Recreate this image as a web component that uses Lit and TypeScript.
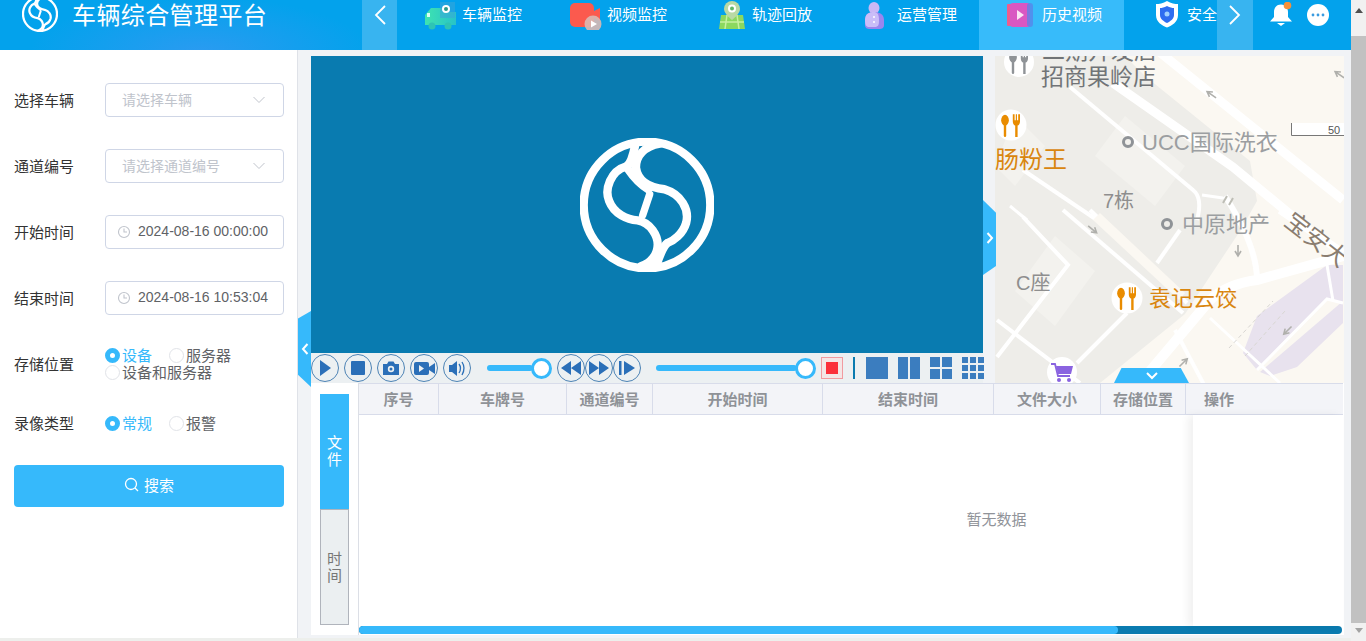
import { LitElement, html, css, svg } from 'lit';
import { customElement } from 'lit/decorators.js';

const logo = (size: number) => html`
  <svg width=${size} height=${size} viewBox="58 37 400 400" fill="none" stroke="#fff" stroke-width="25" stroke-linecap="round">
    <circle cx="258" cy="237" r="189" />
    <path d="M222 62C215 95 210 115 195 122C150 135 130 190 145 225C160 265 200 280 230 283C270 290 290 330 290 355C290 385 270 410 240 420" />
    <path d="M296 54C250 62 225 90 225 125C230 165 265 185 310 190C360 205 385 250 375 290C365 325 335 345 320 350C305 360 295 390 285 420" />
    <path d="M200 128C215 150 235 175 262 190" />
    <path d="M266 205L245 268" stroke-width="22" />
  </svg>
`;

const navIcons = {
  car: html`<svg width="38" height="30" viewBox="0 0 38 30">
    <defs><linearGradient id="cg" x1="0" x2="1"><stop offset="0" stop-color="#3fe3b0" /><stop offset="1" stop-color="#27c3c8" /></linearGradient></defs>
    <path d="M7 8h11v4h14v13H1V15z" fill="url(#cg)" />
    <circle cx="8" cy="26" r="3.500" fill="#2ec4b4" /><circle cx="24" cy="26" r="3.500" fill="#2ec4b4" />
    <rect x="3" y="13" width="3" height="4" fill="#d8fff4" />
    <rect x="16" y="2" width="15" height="16" fill="#3aa6d8" opacity=".55" />
    <circle cx="22" cy="9" r="4" fill="#fff" /><circle cx="22" cy="9" r="2" fill="#2c9a8a" />
  </svg>`,
  video: html`<svg width="38" height="30" viewBox="-1 0 38 30">
    <rect x="0" y="3" width="24" height="24" rx="5" fill="#fb5a4e" />
    <path d="M24 11l6-3v13l-6-3z" fill="#fb5a4e" />
    <circle cx="23" cy="24" r="8.500" fill="#d9b9b4" opacity=".9" />
    <path d="M21 20.500l6 3.500-6 3.500z" fill="#fff" />
  </svg>`,
  track: html`<svg width="38" height="30" viewBox="-4 0 38 30">
    <path d="M3 15h22l2 14H1z" fill="#8bd85f" />
    <path d="M9 15l-2 14M19 15l2 14M2 22h24" stroke="#c6f0a0" stroke-width="1.500" />
    <path d="M14 1a8 8 0 0 1 8 8c0 5-8 11-8 11s-8-6-8-11a8 8 0 0 1 8-8z" fill="#b9d9a4" />
    <circle cx="14" cy="8.500" r="4" fill="#fff" /><circle cx="14" cy="8.500" r="2" fill="#5fb86a" />
  </svg>`,
  person: html`<svg width="38" height="30" viewBox="-3 0 38 30">
    <ellipse cx="12" cy="8" rx="5.500" ry="6" fill="#c9b8f5" />
    <path d="M3 20c0-6 4-8 9-8s10 2 10 8v5c0 3-2 4-5 4H8c-3 0-5-1-5-4z" fill="#9a86ee" />
    <path d="M3 20c0-6 4-8 9-8 3 0 5 2 5 8s-1 7-5 7H7c-3 0-4-2-4-7z" fill="#cabdf8" />
    <circle cx="12" cy="17" r="1" fill="#fff" /><circle cx="12" cy="22" r="1" fill="#fff" />
  </svg>`,
  history: html`<svg width="38" height="30" viewBox="-3 0 38 30">
    <rect x="0" y="4" width="6" height="22" rx="1" fill="#ef5d8d" />
    <rect x="3" y="3" width="20" height="24" rx="3" fill="#d957c2" />
    <rect x="20" y="3" width="6" height="24" rx="3" fill="#5a83e8" opacity=".75" />
    <path d="M10 10l7 5-7 5z" fill="#fbe3f4" />
  </svg>`,
  safe: html`<svg width="38" height="30" viewBox="-6 0 38 30">
    <path d="M12 1c4 2.500 8 3 11 3v11c0 7-6 10.500-11 12.500C7 25.500 1 22 1 15V4c3 0 7-.5 11-3z" fill="#fff" />
    <path d="M12 6c3 1.500 5 2 7 2v7c0 4-4 6.500-7 8-3-1.500-7-4-7-8V8c2 0 4-.5 7-2z" fill="#2f6df0" />
    <circle cx="12" cy="14" r="2.500" fill="#9fd0ff" />
  </svg>`,
};

const navItems = [
  { name: '车辆监控', icon: navIcons.car },
  { name: '视频监控', icon: navIcons.video },
  { name: '轨迹回放', icon: navIcons.track },
  { name: '运营管理', icon: navIcons.person },
  { name: '历史视频', icon: navIcons.history, active: true },
  { name: '安全监控', icon: navIcons.safe },
];

const columns = [
  { name: '序号', width: 80 },
  { name: '车牌号', width: 128 },
  { name: '通道编号', width: 86 },
  { name: '开始时间', width: 170 },
  { name: '结束时间', width: 171 },
  { name: '文件大小', width: 107 },
  { name: '存储位置', width: 85 },
];

const chevronDown = html`<svg width="14" height="8" viewBox="0 0 14 8" fill="none" stroke="#c0c4cc" stroke-width="1"><path d="M1.500 1l5.500 5.500L12.500 1" /></svg>`;
const clock = html`<svg width="14" height="14" viewBox="0 0 14 14" fill="none" stroke="#c0c4cc" stroke-width="1.100"><circle cx="7" cy="7" r="5.500" /><path d="M7 3.500V7h3" /></svg>`;

const forkIcon = (color: string) => svg`
  <g transform="scale(1.200)">
    <ellipse cx="-5" cy="-4" rx="3.200" ry="4.500" fill=${color} />
    <rect x="-6" y="-2" width="2" height="12" rx="1" fill=${color} />
    <path d="M1.500-9v6c0 2 1 3 2 3.500V10h2V.5c1-.5 2-1.500 2-3.500v-6H6v5H5v-5H4v5H3v-5z" fill=${color} />
  </g>
`;

const roads: [string, number][] = [
  ['M162-6L348 144', 9],
  ['M118 27L238 111 302 164', 9],
  ['M285 154L348 197', 8],
  ['M75 31L198 134Q208 142 202 164', 4],
  ['M207 139L228 142', 3],
  ['M185 174L162 207', 4],
  ['M28 114L102 164', 4],
  ['M15 150L32 164', 3],
  ['M68 154L188 257', 4],
  ['M95 154L192 247', 4],
  ['M145 327L215 244Q232 228 262 224L348 200', 10],
  ['M230 140Q262 190 262 224', 6],
  ['M28 161L73 209 2 301', 4],
  ['M2 264L85 327', 4],
  ['M132 257L82 307', 4],
  ['M215 340L180 274', 4],
  ['M215 262L285 327', 3],
  ['M262 314L332 243 348 247', 3],
  ['M332 209L338 245', 3],
];

// little one-way arrows drawn on the roads: [x, y, angle]
const roadArrows: [number, number, number][] = [
  [217, 39, 35],
  [345, 19, 35],
  [97, 173, 220],
  [243, 194, -90],
  [293, 274, -45],
  [188, 307, 135],
];

const mapView = html`
  <svg class="map-art" width="349" height="327" viewBox="0 0 349 327">
    <rect width="349" height="327" fill="#fbf8f2" />
    <path d="M0 0H130L150 20 255 105 262 145 245 175 190 258 105 327H0z" fill="#eeede9" />
    <path d="M20 60L50 90 20 130 0 110zM60 180L100 215 60 270 20 235zM130 60L190 110 160 150 100 100z" fill="#f3f2ee" />
    <path d="M348 209H332L262 260 248 297 262 314 332 243 348 247z" fill="#e8e2ee" />
    <path d="M265 316L348 245V267L302 311 275 320z" fill="#e8e2ee" />
    ${roads.map(([d, w]) => svg`<path d=${d} fill="none" stroke="#fff" stroke-width=${w} />`)}
    <path d="M105 157L190 237 184 244 98 164z" fill="#fbf8f2" />
    <path d="M234 292L278 245M250 300L290 255" fill="none" stroke="#d8d6d2" stroke-width="1" stroke-dasharray="4 3" />
    ${roadArrows.map(
      ([x, y, a]) => svg`<path transform="translate(${x} ${y}) rotate(${a})" d="M-6 0H5M-1-3L-6 0-1 3" fill="none" stroke="#b0b0ac" stroke-width="1.600" />`,
    )}
    <path d="M228 147l4-7M234 149l4-7" stroke="#bdbdb5" stroke-width="2" />

    <text x="47" y="3" class="label dark" font-size="23">二期开发店</text>
    <text x="46" y="29" class="label dark" font-size="23">招商果岭店</text>
    <text x="0" y="112" class="label orange" font-size="24">肠粉王</text>
    <circle cx="133" cy="86" r="4.500" fill="none" stroke="#8f9397" stroke-width="3" />
    <text x="147" y="94" class="label gray" font-size="22">UCC国际洗衣</text>
    <text x="108" y="152" class="label mid" font-size="20">7栋</text>
    <circle cx="172" cy="168" r="4.500" fill="none" stroke="#8f9397" stroke-width="3" />
    <text x="187" y="176" class="label gray" font-size="22">中原地产</text>
    <text transform="translate(288 168) rotate(38)" class="label brown" font-size="24">宝安大</text>
    <text x="21" y="234" class="label mid" font-size="20">C座</text>
    <text x="154" y="250" class="label orange" font-size="22">袁记云饺</text>

    <g transform="translate(24 6)"><circle r="15" fill="#fff" />${forkIcon('#8f9397')}</g>
    <g transform="translate(16 69)"><circle r="15.500" fill="#fff" />${forkIcon('#e98c00')}</g>
    <g transform="translate(132 242)"><circle r="15.500" fill="#fff" />${forkIcon('#e98c00')}</g>
    <g transform="translate(67 316)">
      <circle r="15" fill="#fff" />
      <path d="M-11-8h4l3 12h12" fill="none" stroke="#8a63e0" stroke-width="1.800" />
      <path d="M-6-6H11L9 2H-4z" fill="#8a63e0" />
      <circle cx="-3" cy="8" r="2" fill="#8a63e0" /><circle cx="7" cy="8" r="2" fill="#8a63e0" />
    </g>

    <rect x="296" y="67" width="53" height="13" fill="#fff" />
    <path d="M296.500 67v12.500H349" fill="none" stroke="#777" stroke-width="1" />
    <text x="333" y="78" font-size="11" fill="#555" font-family="Liberation Sans">50</text>
  </svg>
`;

const playerButtons = [
  svg`<path d="M9 6l11 8-11 8z" />`,
  svg`<rect x="7" y="7" width="14" height="14" rx="1" />`,
  svg`<path d="M6 10h4l1.500-2.500h5L18 10h4v11H6z" /><circle cx="14" cy="15" r="3.200" fill="#ecf0f2" /><circle cx="14" cy="15" r="1.500" />`,
  svg`<rect x="4" y="8" width="15" height="13" rx="2" /><path d="M19 13l6-4v11l-6-4z" /><path d="M9 11l5 3.500-5 3.500z" fill="#ecf0f2" />`,
  svg`<path d="M6 11h3l5-4v15l-5-4H6z" /><path d="M16 10q3 4 0 9M19 8q4 6 0 13" fill="none" stroke="#2b6fb8" stroke-width="1.300" />`,
];
const seekButtons = [
  svg`<path d="M14 7v14L4 14zM24 7v14L14 14z" />`,
  svg`<path d="M4 7v14l10-7zM14 7v14l10-7z" />`,
  svg`<rect x="6" y="7" width="2.500" height="14" /><path d="M11 7v14l11-7z" />`,
];

const circleBtn = (icon: unknown) => html`
  <span class="circle"><svg width="28" height="28" viewBox="0 0 28 28" fill="#2b6fb8">${icon}</svg></span>
`;

const grids = [
  svg`<rect width="22" height="22" />`,
  svg`<rect width="10" height="22" /><rect x="12" width="10" height="22" />`,
  svg`<rect width="10" height="10" /><rect x="12" width="10" height="10" /><rect y="12" width="10" height="10" /><rect x="12" y="12" width="10" height="10" />`,
  svg`${[0, 8, 16].map((y) => [0, 8, 16].map((x) => svg`<rect x=${x} y=${y} width="6" height="6" />`))}`,
];

@customElement('app-root')
export class AppRoot extends LitElement {
  static styles = css`
    :host {
      display: block;
      width: 1366px;
      height: 641px;
      overflow: hidden;
      font-family: 'Liberation Sans', 'Noto Sans CJK SC', sans-serif;
      font-size: 14px;
      color: #333;
      background: #fff;
    }
    .page { display: flex; height: 641px; }
    .content { width: 1351px; display: flex; flex-direction: column; }

    /* page scrollbar */
    .vscroll { width: 15px; background: #f1f1f1; display: flex; flex-direction: column; align-items: center; }
    .vscroll .up { margin-top: 8px; border: 4px solid transparent; border-top: 0; border-bottom: 5px solid #505050; }
    .vscroll .thumb { width: 15px; height: 587px; margin-top: 23px; background: #c1c1c1; }
    .vscroll .down { margin-top: 5px; border: 4px solid transparent; border-bottom: 0; border-top: 5px solid #a3a3a3; }

    /* header */
    .header {
      height: 50px;
      flex: none;
      display: flex;
      background: radial-gradient(ellipse 170px 55px at 200px 52px, #2a9bf1, transparent), #03a2ec;
      color: #fff;
    }
    .brand { width: 362px; display: flex; padding-left: 22px; box-sizing: border-box; }
    .brand .mark { margin-top: -4px; height: 37px; }
    .brand .title { margin: 2px 0 0 14px; font-size: 24px; line-height: 28px; letter-spacing: .4px; }
    .arrow { width: 35px; background: #38b4f0; display: flex; align-items: flex-start; justify-content: center; padding-top: 4px; box-sizing: border-box; }
    .arrow.next { width: 36px; }
    .nav { width: 820px; overflow: hidden; display: flex; padding-left: 2px; box-sizing: border-box; }
    .nav-item { flex: none; width: 145px; height: 50px; display: flex; padding-left: 25px; box-sizing: border-box; font-size: 15px; line-height: 30px; white-space: nowrap; }
    .nav-item.active { background: #37bbfa; }
    .nav-item svg { flex: none; }
    .tools { display: flex; padding: 2px 0 0 17px; gap: 15px; }
    .tools svg { display: block; }

    .body { flex: 1; display: flex; min-height: 0; }

    /* search form */
    .side { width: 270px; flex: none; padding: 33px 13px 0 14px; box-sizing: content-box; border-right: 1px solid #dfe2e8; }
    .row { display: flex; align-items: center; margin-bottom: 32px; }
    .row label { width: 91px; flex: none; font-size: 15px; padding-bottom: 2px; }
    .field { width: 179px; height: 34px; box-sizing: border-box; border: 1px solid #cfd6e6; border-radius: 4px; display: flex; align-items: center; padding: 0 17px 0 16px; justify-content: space-between; color: #c0c4cc; }
    .field span { padding-bottom: 2px; }
    .field.date { justify-content: flex-start; padding: 0 11px; gap: 7px; color: #606266; }
    .radios { font-size: 15px; line-height: 17px; color: #606266; }
    .radio-line { display: flex; }
    .radio { display: flex; align-items: center; }
    .radio + .radio { margin-left: 17px; }
    .dot { width: 15px; height: 15px; box-sizing: border-box; border-radius: 50%; border: 1px solid #e1e3e8; background: #fff; margin-right: 2px; }
    .radio.on { color: #36b9fb; }
    .radio.on .dot { border: 5px solid #36b9fb; }
    .types { margin-bottom: 30px; margin-top: -1px; }
    .search { height: 42px; box-sizing: border-box; padding-bottom: 3px; background: #36b9fb; border-radius: 4px; color: #fff; font-size: 15px; display: flex; align-items: center; justify-content: center; gap: 5px; }

    /* player + map + table */
    .main { flex: 1; min-width: 0; background: #f1f3f6; padding: 6px 7px 6px 13px; position: relative; }
    .top { display: flex; gap: 12px; height: 327px; }
    .player { width: 672px; flex: none; display: flex; flex-direction: column; }
    .screen { height: 297px; background: #097bb0; display: flex; align-items: center; justify-content: center; overflow: hidden; }
    .controls { height: 30px; background: #ecf0f2; display: flex; align-items: center; }
    .circle { width: 28px; height: 28px; box-sizing: border-box; border: 1px solid #4d83b5; border-radius: 50%; flex: none; display: block; position: relative; }
    .circle svg { position: absolute; left: -1px; top: -1px; }
    .group { display: flex; gap: 5px; }
    .seek { display: flex; margin-left: 5px; }
    .slider { height: 22px; display: flex; align-items: center; flex: none; }
    .slider .track { flex: 1; height: 6px; background: #36b9fb; border-radius: 3px; margin-right: -2px; }
    .slider .knob { width: 21px; height: 21px; flex: none; box-sizing: border-box; background: #fff; border: 3px solid #36b9fb; border-radius: 50%; }
    .rec { width: 22px; height: 22px; box-sizing: border-box; border: 1px solid #f19ba0; background: #f4e6e6; margin-left: 5px; display: flex; align-items: center; justify-content: center; flex: none; }
    .rec i { width: 12px; height: 12px; background: #fb2f3a; display: block; }
    .divider { width: 2px; height: 22px; background: #0a7bb0; margin: 0 11px 0 10px; flex: none; }
    .grids { display: flex; gap: 10px; }
    .grids svg { display: block; fill: #3b7dbf; }

    .map { width: 349px; flex: none; overflow: hidden; }
    .map-art { display: block; }
    .label { font-family: 'Liberation Sans', 'Noto Sans CJK SC', sans-serif; }
    .dark { fill: #717477; }
    .gray { fill: #9b9ea1; }
    .mid { fill: #8e8e8e; }
    .orange { fill: #d9860f; }
    .brown { fill: #8a7d70; }

    /* flaps lying over the panels */
    .flap { position: absolute; background: #36b9fb; display: flex; align-items: center; justify-content: center; }
    .flap-left { left: 0; top: 261px; width: 13px; height: 76px; clip-path: polygon(100% 0, 100% 100%, 0 84%, 0 10%); }
    .flap-right { left: 685px; top: 150px; width: 13px; height: 75px; clip-path: polygon(0 0, 100% 17%, 100% 88%, 0 100%); }
    .flap-down { left: 816px; top: 318px; width: 75px; height: 15px; clip-path: polygon(10% 0, 89% 0, 100% 100%, 0 100%); }

    .bottom { height: 252px; background: #fff; display: flex; }
    .tabs { width: 29px; margin: 11px 9px 10px 9px; flex: none; display: flex; flex-direction: column; }
    .tab { flex: 1; display: flex; align-items: center; justify-content: center; text-align: center; font-size: 15px; line-height: 17px; width: 29px; box-sizing: border-box; }
    .tab.on { background: #36b9fb; color: #fff; }
    .tab.off { background: #ebeff1; color: #777; border: 1px solid #b0b4bc; }
    .table { width: 985px; flex: none; display: flex; flex-direction: column; border-left: 1px solid #dcdfe6; box-sizing: border-box; position: relative; }
    .thead { height: 32px; flex: none; display: flex; background: #f3f4f8; box-sizing: border-box; border-top: 1px solid #d8dcea; border-bottom: 1px solid #d8dcea; color: #8f9297; font-size: 15px; font-weight: bold; }
    .th { flex: none; display: flex; align-items: center; justify-content: center; box-sizing: border-box; border-right: 1px solid #d8dcea; padding-bottom: 1px; }
    .th.op { flex: 1; border-right: 0; justify-content: flex-start; padding-left: 18px; }
    .tbody { flex: 1; display: flex; align-items: center; justify-content: center; color: #909399; font-size: 15px; padding-left: 291px; position: relative; padding-bottom: 4px; box-sizing: border-box; }
    .fixed { position: absolute; right: 0; top: 0; bottom: 0; width: 150px; background: #fff; box-shadow: -5px 0 8px rgba(0, 0, 0, .06); }
    .hbar { height: 8px; margin: 0 1px 1px 0; flex: none; background: #0a7bb0; border-radius: 4px; overflow: hidden; }
    .hbar i { display: block; width: 759px; height: 8px; background: #36b9fb; border-radius: 4px; }
    .edge { height: 3px; flex: none; background: #edefec; }
  `;

  private field(name: string, placeholder: string) {
    return html`<div class="row"><label>${name}</label><div class="field"><span>${placeholder}</span>${chevronDown}</div></div>`;
  }

  private dateField(name: string, value: string) {
    return html`<div class="row"><label>${name}</label><div class="field date">${clock}<span>${value}</span></div></div>`;
  }

  private radio(name: string, on = false) {
    return html`<span class="radio ${on ? 'on' : ''}"><span class="dot"></span>${name}</span>`;
  }

  render() {
    return html`
      <div class="page">
        <div class="content">
          <header class="header">
            <div class="brand">
              <div class="mark">${logo(36)}</div>
              <div class="title">车辆综合管理平台</div>
            </div>
            <div class="arrow"><svg width="14" height="22" viewBox="0 0 14 22" fill="none" stroke="#fff" stroke-width="1.800"><path d="M12 2L3 11l9 9" /></svg></div>
            <nav class="nav">
              ${navItems.map((n) => html`<div class="nav-item ${n.active ? 'active' : ''}">${n.icon}<span>${n.name}</span></div>`)}
            </nav>
            <div class="arrow next"><svg width="14" height="22" viewBox="0 0 14 22" fill="none" stroke="#fff" stroke-width="1.800"><path d="M2 2l9 9-9 9" /></svg></div>
            <div class="tools">
              <svg width="22" height="26" viewBox="0 0 22 26">
                <path d="M11 2.500c4.500 0 7 3.500 7 7.500v5l4 4.500H0l4-4.500v-5c0-4 2.500-7.500 7-7.500z" fill="#fff" />
                <path d="M7 21h8l-4 3z" fill="#fff" />
                <circle cx="17.500" cy="3.500" r="3.800" fill="#f5913a" />
              </svg>
              <svg width="22" height="26" viewBox="0 0 22 26">
                <circle cx="11" cy="13" r="11" fill="#fff" />
                <circle cx="6" cy="13" r="1.400" fill="#3a9be0" /><circle cx="11" cy="13" r="1.400" fill="#3a9be0" /><circle cx="16" cy="13" r="1.400" fill="#3a9be0" />
              </svg>
            </div>
          </header>
          <div class="body">
            <aside class="side">
              ${this.field('选择车辆', '请选择车辆')}
              ${this.field('通道编号', '请选择通道编号')}
              ${this.dateField('开始时间', '2024-08-16 00:00:00')}
              ${this.dateField('结束时间', '2024-08-16 10:53:04')}
              <div class="row">
                <label>存储位置</label>
                <div class="radios">
                  <div class="radio-line">${this.radio('设备', true)}${this.radio('服务器')}</div>
                  <div class="radio-line">${this.radio('设备和服务器')}</div>
                </div>
              </div>
              <div class="row types">
                <label>录像类型</label>
                <div class="radios"><div class="radio-line">${this.radio('常规', true)}${this.radio('报警')}</div></div>
              </div>
              <div class="search">
                <svg width="15" height="15" viewBox="0 0 15 15" fill="none" stroke="#fff" stroke-width="1.300"><circle cx="7" cy="7" r="5.500" /><path d="M11 11l3 3" /></svg>
                <span>搜索</span>
              </div>
            </aside>
            <main class="main">
              <div class="top">
                <div class="player">
                  <div class="screen">${logo(134)}</div>
                  <div class="controls">
                    <div class="group">${playerButtons.map(circleBtn)}</div>
                    <div class="slider" style="width:65px;margin-left:16px"><div class="track"></div><div class="knob"></div></div>
                    <div class="seek">${seekButtons.map(circleBtn)}</div>
                    <div class="slider" style="width:160px;margin-left:15px"><div class="track"></div><div class="knob"></div></div>
                    <div class="rec"><i></i></div>
                    <div class="divider"></div>
                    <div class="grids">${grids.map((g) => html`<svg width="22" height="22" viewBox="0 0 22 22">${g}</svg>`)}</div>
                  </div>
                </div>
                <div class="map">${mapView}</div>
              </div>
              <div class="bottom">
                <div class="tabs">
                  <div class="tab on">文<br />件</div>
                  <div class="tab off">时<br />间</div>
                </div>
                <div class="table">
                  <div class="thead">
                    ${columns.map((c) => html`<div class="th" style="width:${c.width}px">${c.name}</div>`)}
                    <div class="th op">操作</div>
                  </div>
                  <div class="tbody">暂无数据<div class="fixed"></div></div>
                  <div class="hbar"><i></i></div>
                </div>
              </div>
              <div class="flap flap-left"><svg width="8" height="12" viewBox="0 0 8 12" fill="none" stroke="#fff" stroke-width="2"><path d="M6.500 1L2 6l4.500 5" /></svg></div>
              <div class="flap flap-right"><svg width="8" height="12" viewBox="0 0 8 12" fill="none" stroke="#fff" stroke-width="2"><path d="M1.500 1L6 6l-4.500 5" /></svg></div>
              <div class="flap flap-down"><svg width="12" height="8" viewBox="0 0 12 8" fill="none" stroke="#fff" stroke-width="2"><path d="M1 1l5 5 5-5" /></svg></div>
            </main>
          </div>
          <div class="edge"></div>
        </div>
        <div class="vscroll"><i class="up"></i><i class="thumb"></i><i class="down"></i></div>
      </div>
    `;
  }
}

declare global {
  interface HTMLElementTagNameMap {
    'app-root': AppRoot;
  }
}
